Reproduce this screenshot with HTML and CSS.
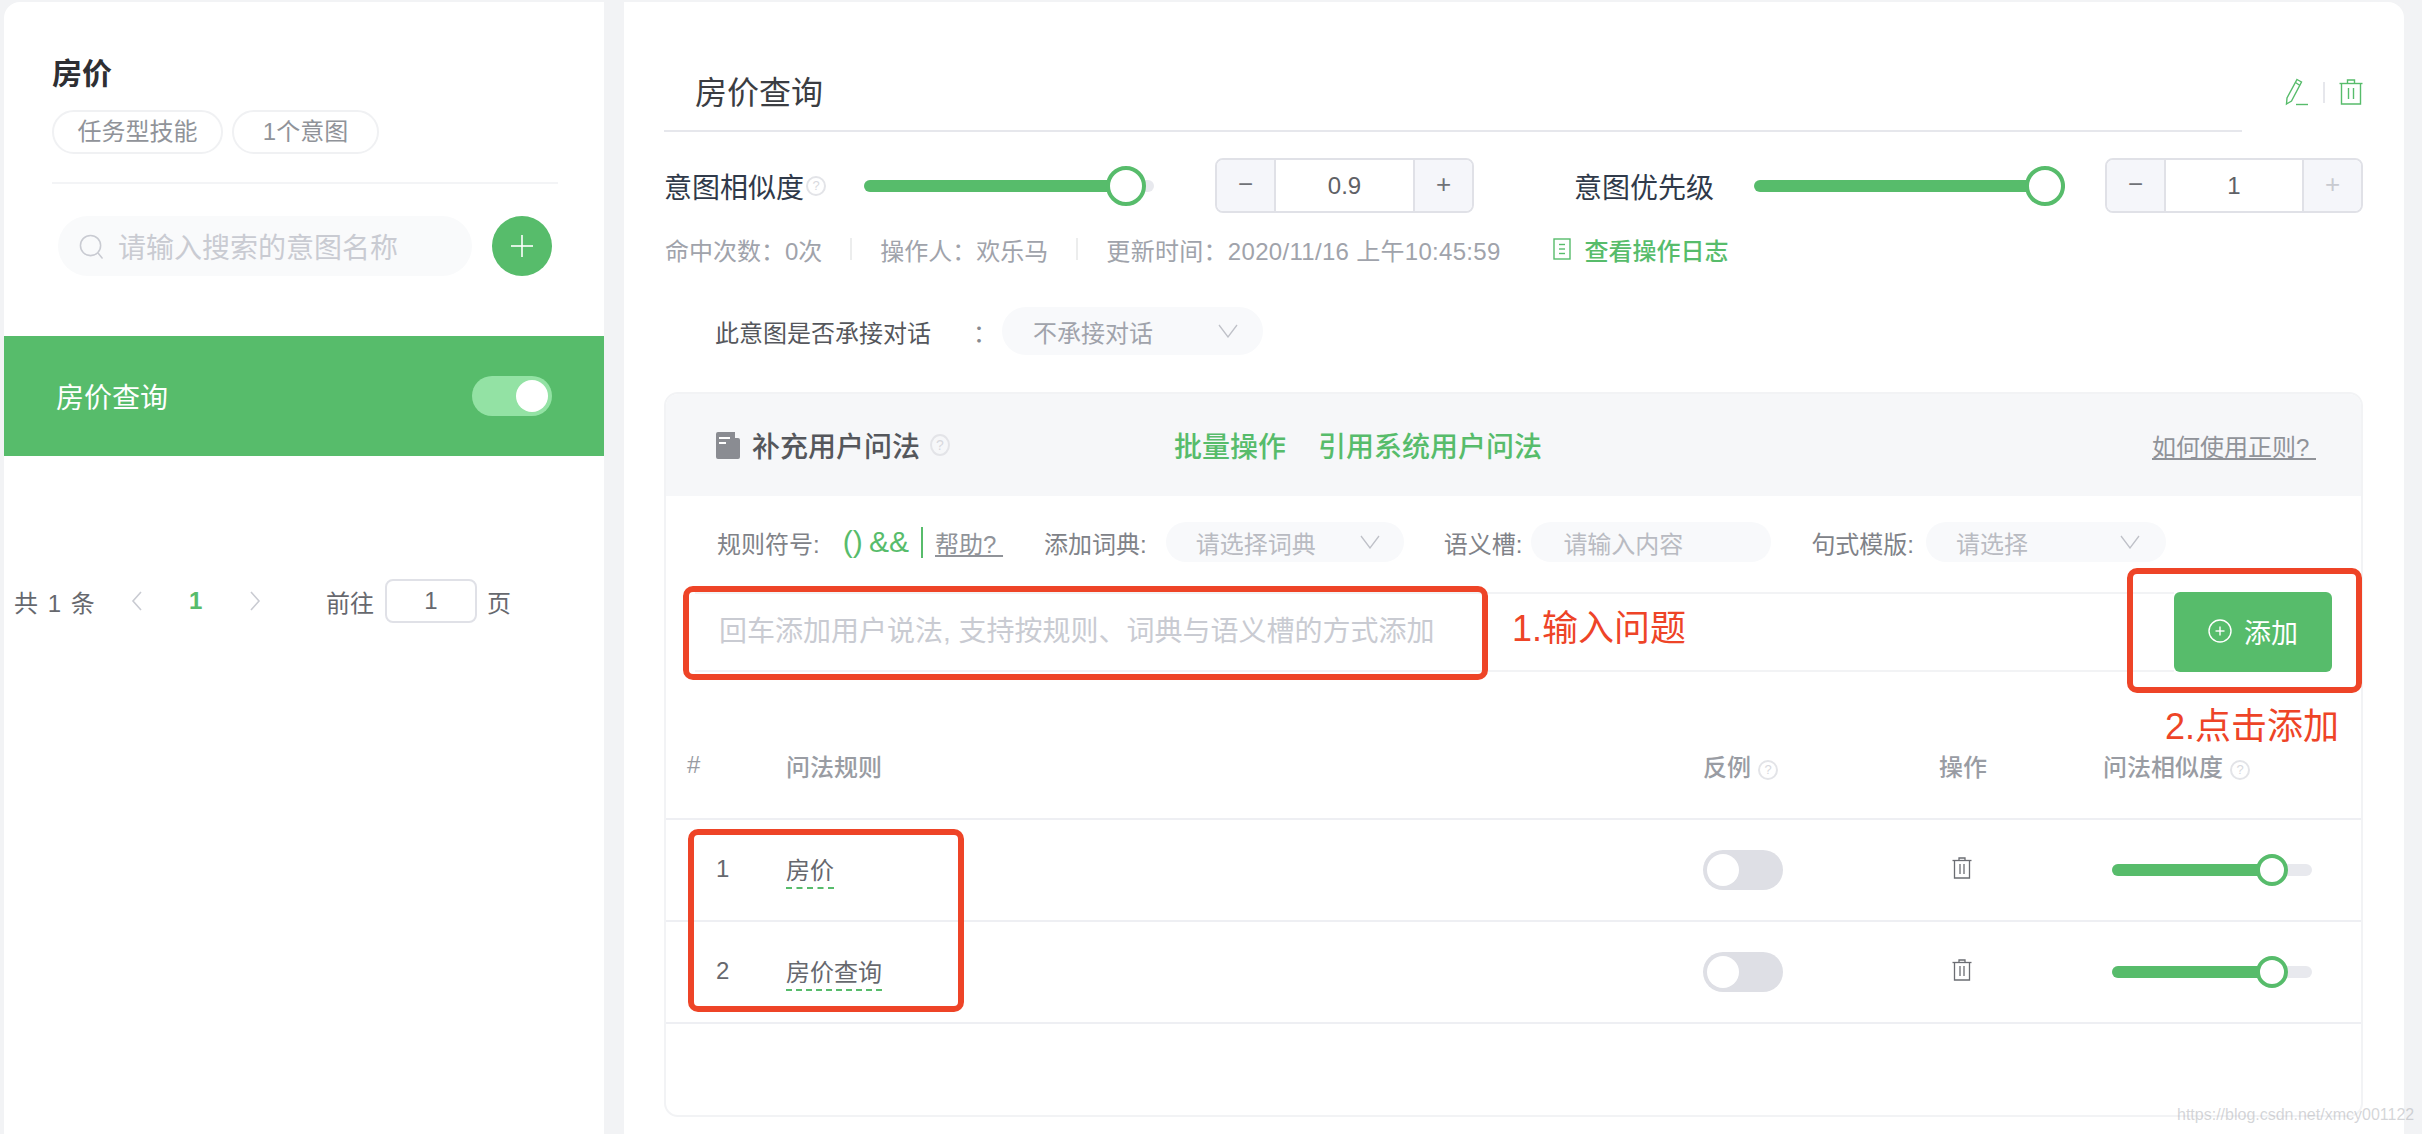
FILE: index.html
```html
<!DOCTYPE html>
<html>
<head>
    <title>房价查询</title>
    <meta name="viewport" content="width=device-width, initial-scale=1.0">
    <link rel="stylesheet" href="styles.css">
</head>
<body>
    <!-- Left column -->
    <aside class="sidebar">
        <div class="side-head">
            <div class="side-title">房价</div>
            <div class="chips">
                <span class="chip chip-skill">任务型技能</span>
                <span class="chip chip-count">1个意图</span>
            </div>
        </div>

        <div class="side-search">
            <div class="search-box">
                <svg class="search-icon" viewBox="0 0 26 26" fill="none" stroke="currentColor" stroke-width="1.6" stroke-linecap="round">
                    <circle cx="12" cy="12" r="10.5"/>
                    <line x1="20" y1="20" x2="24" y2="25"/>
                </svg>
                <span>请输入搜索的意图名称</span>
            </div>
            <button class="add-round">
                <svg viewBox="0 0 24 24" width="24" height="24" stroke="currentColor" stroke-width="1.6">
                    <line x1="12" y1="1" x2="12" y2="23"/>
                    <line x1="1" y1="12" x2="23" y2="12"/>
                </svg>
            </button>
        </div>

        <div class="intent-item">
            <span>房价查询</span>
            <span class="toggle toggle-on"><i></i></span>
        </div>

        <div class="pager">
            <span class="pager-total">共 1 条</span>
            <svg class="pager-arrow pager-prev" viewBox="0 0 12 20" fill="none" stroke="currentColor" stroke-width="1.6"><polyline points="10,1 2,10 10,19"/></svg>
            <span class="pager-num">1</span>
            <svg class="pager-arrow pager-next" viewBox="0 0 12 20" fill="none" stroke="currentColor" stroke-width="1.6"><polyline points="2,1 10,10 2,19"/></svg>
            <span class="pager-goto">前往</span>
            <span class="pager-input">1</span>
            <span class="pager-unit">页</span>
        </div>
    </aside>

    <!-- Right panel -->
    <main class="panel">
        <div class="title-row">
            <div class="title-box">房价查询</div>
            <div class="title-actions">
                <svg class="icon-edit" viewBox="0 0 24 28" fill="none" stroke="currentColor" stroke-width="1.4">
                    <path d="M12 1.500 L16.500 4 L6.500 23 L1.500 26 L2 20 Z"/>
                    <line x1="10.500" y1="4.500" x2="15" y2="7.500"/>
                    <line x1="11" y1="26.500" x2="23" y2="26.500"/>
                </svg>
                <span class="action-sep"></span>
                <svg class="icon-trash-green" viewBox="0 0 24 26" fill="none" stroke="currentColor" stroke-width="1.4">
                    <path d="M8.500 4 V1 H15.500 V4"/>
                    <line x1="0.500" y1="4.500" x2="23.500" y2="4.500"/>
                    <path d="M2.500 4.500 V25 H21.500 V4.500"/>
                    <line x1="9.500" y1="9" x2="9.500" y2="20"/>
                    <line x1="14.500" y1="9" x2="14.500" y2="20"/>
                </svg>
            </div>
        </div>

        <div class="setting-row">
            <div class="setting-label label-sim">意图相似度<span class="help help-sm">?</span></div>
            <div class="slider slider-sim">
                <div class="slider-track"><div class="slider-fill" style="width: 90.500%"></div></div>
                <span class="slider-thumb" style="left: 90.500%"></span>
            </div>
            <div class="number number-sim">
                <span class="number-btn">−</span>
                <span class="number-val">0.9</span>
                <span class="number-btn">+</span>
            </div>
            <div class="setting-label label-pri">意图优先级</div>
            <div class="slider slider-pri">
                <div class="slider-track"><div class="slider-fill" style="width: 100%"></div></div>
                <span class="slider-thumb" style="left: 93.600%"></span>
            </div>
            <div class="number number-pri">
                <span class="number-btn">−</span>
                <span class="number-val">1</span>
                <span class="number-btn number-off">+</span>
            </div>
        </div>

        <div class="info-row">
            <span>命中次数：0次</span>
            <span class="info-sep"></span>
            <span>操作人：欢乐马</span>
            <span class="info-sep"></span>
            <span class="info-time">更新时间：2020/11/16 上午10:45:59</span>
            <svg class="icon-log" viewBox="0 0 18 22" fill="none" stroke="currentColor" stroke-width="1.4">
                <rect x="1" y="1" width="16" height="20"/>
                <line x1="6" y1="6.500" x2="12" y2="6.500"/>
                <line x1="6" y1="11" x2="12" y2="11"/>
                <line x1="6" y1="15.500" x2="12" y2="15.500"/>
            </svg>
            <a class="log-link">查看操作日志</a>
        </div>

        <div class="context-row">
            <span class="context-label">此意图是否承接对话</span>
            <span class="context-colon">：</span>
            <div class="select select-context">
                <span>不承接对话</span>
                <svg class="chevron" viewBox="0 0 20 14" fill="none" stroke="currentColor" stroke-width="1.3"><polyline points="1,1 10,13 19,1"/></svg>
            </div>
        </div>

        <section class="card">
            <div class="card-head">
                <svg class="icon-book" viewBox="0 0 24 27">
                    <path fill="#8a8c92" d="M2 0 H19 V6 H22 Q24 6 24 8 V25 Q24 27 22 27 H2 Q0 27 0 25 V2 Q0 0 2 0 Z"/>
                    <path fill="#fff" d="M3 5 H14 V7 H3 Z M3 10 H10 V12 H3 Z"/>
                </svg>
                <span class="card-title">补充用户问法</span>
                <span class="help help-card">?</span>
                <a class="head-link link-batch">批量操作</a>
                <a class="head-link link-quote">引用系统用户问法</a>
                <a class="regex-link">如何使用正则?&nbsp;</a>
            </div>

            <div class="toolbar">
                <span class="tool-label">规则符号:</span>
                <span class="rule-signs">() &amp;&amp;</span>
                <span class="rule-bar"></span>
                <a class="help-link">帮助?&nbsp;</a>
                <span class="tool-label tool-dict">添加词典:</span>
                <div class="select select-dict">
                    <span>请选择词典</span>
                    <svg class="chevron" viewBox="0 0 20 14" fill="none" stroke="currentColor" stroke-width="1.3"><polyline points="1,1 10,13 19,1"/></svg>
                </div>
                <span class="tool-label tool-slot">语义槽:</span>
                <div class="select select-slot"><span>请输入内容</span></div>
                <span class="tool-label tool-tpl">句式模版:</span>
                <div class="select select-tpl">
                    <span>请选择</span>
                    <svg class="chevron" viewBox="0 0 20 14" fill="none" stroke="currentColor" stroke-width="1.3"><polyline points="1,1 10,13 19,1"/></svg>
                </div>
            </div>

            <div class="add-row">
                <div class="add-input">回车添加用户说法, 支持按规则、词典与语义槽的方式添加</div>
                <button class="add-btn">
                    <svg viewBox="0 0 24 24" width="24" height="24" fill="none" stroke="currentColor" stroke-width="1.4">
                        <circle cx="12" cy="12" r="11"/>
                        <line x1="12" y1="7.500" x2="12" y2="16.500"/>
                        <line x1="7.500" y1="12" x2="16.500" y2="12"/>
                    </svg>
                    <span>添加</span>
                </button>
            </div>

            <div class="table-row table-head">
                <span class="col-hash">#</span>
                <span>问法规则</span>
                <span>反例<span class="help help-th">?</span></span>
                <span>操作</span>
                <span>问法相似度<span class="help help-th">?</span></span>
            </div>

            <div class="table-row">
                <span class="col-index">1</span>
                <span><span class="rule-text">房价</span></span>
                <span class="toggle toggle-off"><i></i></span>
                <svg class="icon-trash" viewBox="0 0 20 22" fill="none" stroke="currentColor" stroke-width="1.3">
                    <path d="M7 3 V1 H13 V3"/>
                    <line x1="0.500" y1="3.500" x2="19.500" y2="3.500"/>
                    <path d="M2.500 3.500 V21 H17.500 V3.500"/>
                    <line x1="8" y1="7" x2="8" y2="17"/>
                    <line x1="12" y1="7" x2="12" y2="17"/>
                </svg>
                <div class="slider slider-row">
                    <div class="slider-track"><div class="slider-fill" style="width: 80%"></div></div>
                    <span class="slider-thumb" style="left: 80%"></span>
                </div>
            </div>

            <div class="table-row">
                <span class="col-index">2</span>
                <span><span class="rule-text">房价查询</span></span>
                <span class="toggle toggle-off"><i></i></span>
                <svg class="icon-trash" viewBox="0 0 20 22" fill="none" stroke="currentColor" stroke-width="1.3">
                    <path d="M7 3 V1 H13 V3"/>
                    <line x1="0.500" y1="3.500" x2="19.500" y2="3.500"/>
                    <path d="M2.500 3.500 V21 H17.500 V3.500"/>
                    <line x1="8" y1="7" x2="8" y2="17"/>
                    <line x1="12" y1="7" x2="12" y2="17"/>
                </svg>
                <div class="slider slider-row">
                    <div class="slider-track"><div class="slider-fill" style="width: 80%"></div></div>
                    <span class="slider-thumb" style="left: 80%"></span>
                </div>
            </div>
        </section>
    </main>

    <!-- Red marks drawn over the screenshot -->
    <div class="mark mark-input"></div>
    <div class="mark mark-add"></div>
    <div class="mark mark-rows"></div>
    <div class="note note-input">1.输入问题</div>
    <div class="note note-add">2.点击添加</div>
    <div class="watermark">https://blog.csdn.net/xmcy001122</div>
</body>
</html>
```

FILE: styles.css
```css
* {
    box-sizing: border-box;
}

html, body {
    height: 100%;
}

body {
    margin: 0;
    position: relative;
    overflow: hidden;
    display: flex;
    align-items: flex-start;
    background-color: #f2f3f5;
    color: #6b6d73;
    font-family: "Liberation Sans", "Noto Sans CJK SC", sans-serif;
    font-size: 24px;
    white-space: nowrap;
}

button {
    border: none;
    padding: 0;
    font-family: inherit;
}

/* sidebar */
.sidebar {
    width: 600px;
    height: 1132px;
    margin: 2px 0 0 4px;
    background-color: white;
    border-top-left-radius: 16px;
}

.side-head {
    margin: 0 46px 0 48px;
    padding: 56px 0 28px;
    border-bottom: 2px solid #f3f4f6;
}

.side-title {
    height: 32px;
    line-height: 32px;
    font-size: 30px;
    font-weight: 700;
    color: #2e2f33;
}

.chips {
    display: flex;
    gap: 9px;
    margin-top: 20px;
}

.chip {
    height: 44px;
    line-height: 40px;
    border: 2px solid #f0f1f3;
    border-radius: 22px;
    font-size: 24px;
    color: #909399;
    text-align: center;
}

.chip-skill {
    width: 171px;
}

.chip-count {
    width: 147px;
}

.side-search {
    display: flex;
    gap: 20px;
    margin: 32px 0 0 54px;
}

.search-box {
    width: 414px;
    height: 60px;
    padding-left: 21px;
    display: flex;
    align-items: center;
    gap: 14px;
    background-color: #f9fafb;
    border-radius: 30px;
    font-size: 28px;
    color: #c9cbd2;
}

.search-icon {
    width: 25px;
    height: 25px;
}

.add-round {
    width: 60px;
    height: 60px;
    border-radius: 50%;
    display: flex;
    align-items: center;
    justify-content: center;
    background-color: #57bc6b;
    color: white;
}

.intent-item {
    height: 120px;
    margin-top: 60px;
    padding: 0 52px;
    display: flex;
    align-items: center;
    justify-content: space-between;
    background-color: #57bc6b;
    color: white;
    font-size: 28px;
}

.toggle {
    display: flex;
    align-items: center;
    width: 80px;
    height: 40px;
    padding: 0 4px;
    border-radius: 20px;
}

.toggle i {
    width: 32px;
    height: 32px;
    border-radius: 50%;
    background-color: white;
}

.toggle-on {
    justify-content: flex-end;
    background-color: #93e2a4;
}

.toggle-off {
    background-color: #dedfe5;
}

.pager {
    display: flex;
    align-items: center;
    height: 44px;
    margin-top: 123px;
    padding-left: 10px;
    color: #66686e;
}

.pager-total {
    width: 80px;
    word-spacing: 3px;
}

.pager-arrow {
    width: 12px;
    height: 20px;
    color: #c9cbd2;
}

.pager-prev {
    margin-left: 37px;
}

.pager-num {
    width: 14px;
    margin-left: 46px;
    font-weight: 700;
    color: #57bc6b;
}

.pager-next {
    margin-left: 46px;
}

.pager-goto {
    margin-left: 65px;
}

.pager-input {
    width: 92px;
    height: 44px;
    line-height: 40px;
    margin-left: 11px;
    border: 2px solid #e0e1e7;
    border-radius: 8px;
    text-align: center;
}

.pager-unit {
    margin-left: 10px;
}

/* right panel */
.panel {
    width: 1780px;
    height: 1132px;
    margin: 2px 0 0 20px;
    padding: 0 41px 0 40px;
    background-color: white;
    border-top-right-radius: 16px;
}

.title-row {
    display: flex;
    justify-content: space-between;
    align-items: flex-start;
}

.title-box {
    width: 1578px;
    height: 130px;
    padding: 69px 0 0 31px;
    line-height: 44px;
    border-bottom: 2px solid #e6e7ec;
    font-size: 32px;
    color: #3b3d42;
}

.title-actions {
    display: flex;
    align-items: center;
    margin-top: 76px;
    color: #57bc6b;
}

.icon-edit {
    width: 24px;
    height: 28px;
}

.action-sep {
    width: 2px;
    height: 21px;
    margin: 0 14px;
    background-color: #e6e7ec;
}

.icon-trash-green {
    width: 24px;
    height: 26px;
}

.setting-row {
    display: flex;
    align-items: center;
    height: 55px;
    margin-top: 26px;
}

.setting-label {
    display: flex;
    align-items: center;
    font-size: 28px;
    color: #303a4a;
}

.label-sim {
    width: 200px;
}

.label-pri {
    width: 140px;
    margin-left: 100px;
}

.help {
    display: inline-block;
    border: 2px solid #e3e4e8;
    border-radius: 50%;
    text-align: center;
    color: #d8d9de;
    font-weight: 400;
}

.help-sm {
    width: 20px;
    height: 20px;
    line-height: 16px;
    margin-left: 2px;
    font-size: 13px;
}

.help-card {
    width: 20px;
    height: 22px;
    line-height: 18px;
    margin-left: 10px;
    font-size: 14px;
}

.help-th {
    width: 20px;
    height: 20px;
    line-height: 16px;
    margin-left: 7px;
    font-size: 13px;
    vertical-align: 2px;
}

.slider {
    position: relative;
    display: flex;
    align-items: center;
    height: 40px;
}

.slider-track {
    width: 100%;
    height: 12px;
    border-radius: 6px;
    background-color: #e8e9ee;
    overflow: hidden;
}

.slider-fill {
    height: 100%;
    background-color: #57bc6b;
}

.slider-thumb {
    position: absolute;
    top: 0;
    width: 40px;
    height: 40px;
    margin-left: -20px;
    border: 4px solid #57bc6b;
    border-radius: 50%;
    background-color: white;
}

.slider-sim {
    width: 290px;
}

.slider-pri {
    width: 311px;
    margin-left: 40px;
}

.slider-row {
    width: 200px;
    height: 32px;
    margin-left: 9px;
}

.slider-row .slider-thumb {
    width: 32px;
    height: 32px;
    margin-left: -16px;
}

.number {
    display: flex;
    height: 55px;
    border: 2px solid #e0e1e7;
    border-radius: 8px;
    overflow: hidden;
}

.number-sim {
    width: 259px;
    margin-left: 61px;
}

.number-pri {
    width: 258px;
    margin-left: 40px;
}

.number-btn {
    width: 57px;
    line-height: 49px;
    background-color: #f5f6fa;
    text-align: center;
    font-size: 26px;
    color: #707277;
}

.number-off {
    color: #c8cad0;
}

.number-val {
    flex: 1;
    line-height: 51px;
    border-left: 2px solid #e0e1e7;
    border-right: 2px solid #e0e1e7;
    text-align: center;
    color: #5f6166;
}

.info-row {
    display: flex;
    align-items: center;
    height: 40px;
    margin-top: 16px;
    padding-left: 1px;
    color: #a0a3ab;
}

.info-sep {
    width: 2px;
    height: 22px;
    margin: 0 28px;
    background-color: #eceded;
}

.info-time {
    letter-spacing: 0.3px;
}

.icon-log {
    width: 18px;
    height: 22px;
    margin-left: 52px;
    color: #57bc6b;
}

.log-link {
    margin-left: 14px;
    font-weight: 500;
    color: #57bc6b;
}

.context-row {
    display: flex;
    align-items: center;
    height: 48px;
    margin-top: 38px;
    padding-left: 51px;
    color: #55575c;
}

.context-label {
    width: 258px;
    font-size: 24px;
}

.context-colon {
    width: 29px;
    color: #888a90;
}

.select {
    position: relative;
    display: flex;
    align-items: center;
    justify-content: space-between;
    background-color: #f8f9fb;
    border-radius: 24px;
    color: #b9bbc2;
}

.select-context {
    width: 261px;
    height: 48px;
    padding: 0 25px 0 31px;
    color: #a0a3ab;
}

.chevron {
    width: 20px;
    height: 14px;
    color: #bfc1c8;
}

/* card */
.card {
    width: 1699px;
    height: 725px;
    margin-top: 37px;
    border: 2px solid #f2f3f5;
    border-radius: 14px;
    overflow: hidden;
}

.card-head {
    display: flex;
    align-items: center;
    height: 102px;
    padding-left: 50px;
    background-color: #f6f7f9;
}

.icon-book {
    width: 24px;
    height: 27px;
}

.card-title {
    margin-left: 12px;
    font-size: 28px;
    font-weight: 500;
    color: #55575c;
}

.head-link {
    font-size: 28px;
    font-weight: 500;
    color: #57bc6b;
}

.link-batch {
    margin-left: 224px;
}

.link-quote {
    margin-left: 32px;
}

.regex-link {
    margin-left: auto;
    margin-right: 45px;
    color: #909399;
    text-decoration: underline;
}

.toolbar {
    display: flex;
    align-items: center;
    height: 96px;
    padding: 0 0 4px 51px;
}

.tool-label {
    color: #808288;
}

.rule-signs {
    margin-left: 23px;
    font-size: 30px;
    word-spacing: -2px;
    color: #57bc6b;
}

.rule-bar {
    width: 2px;
    height: 31px;
    margin-left: 12px;
    background-color: #57bc6b;
}

.help-link {
    margin-left: 12px;
    color: #909399;
    text-decoration: underline;
}

.tool-dict {
    margin-left: 41px;
}

.select-dict {
    width: 238px;
    height: 40px;
    margin-left: 19px;
    padding: 0 24px 0 30px;
}

.tool-slot {
    margin-left: 40px;
}

.select-slot {
    width: 240px;
    height: 40px;
    margin-left: 9px;
    padding-left: 32px;
}

.tool-tpl {
    margin-left: 40px;
}

.select-tpl {
    width: 240px;
    height: 40px;
    margin-left: 12px;
    padding: 0 26px 0 30px;
}

.add-row {
    display: flex;
    height: 80px;
    margin: 0 29px;
}

.add-input {
    flex: 1;
    padding-left: 24px;
    line-height: 76px;
    border-top: 2px solid #f2f3f5;
    border-bottom: 2px solid #f2f3f5;
    font-size: 28px;
    color: #c9cbd2;
}

.add-btn {
    display: flex;
    align-items: center;
    justify-content: center;
    gap: 12px;
    width: 158px;
    padding-bottom: 2px;
    background-color: #57bc6b;
    border-radius: 6px;
    color: white;
    font-size: 27px;
}

.table-row {
    display: grid;
    grid-template-columns: 120px 917px 236px 164px 1fr;
    align-items: center;
    height: 102px;
    border-bottom: 2px solid #eeeff3;
}

.table-head {
    height: 148px;
    padding-top: 40px;
    font-size: 24px;
    font-weight: 500;
    color: #999ca3;
}

.col-hash {
    padding-left: 21px;
}

.col-index {
    padding: 0 0 2px 50px;
    color: #66686e;
}

.rule-text {
    display: inline-block;
    line-height: 32px;
    padding-top: 3px;
    border-bottom: 2px dashed #57bc6b;
    color: #66686e;
}

.icon-trash {
    width: 20px;
    height: 22px;
    margin: -4px 0 0 13px;
    color: #6b6d73;
}

/* annotations on top of the page */
.mark {
    position: absolute;
    border: 6px solid #ee4427;
    border-radius: 10px;
}

.mark-input {
    left: 683px;
    top: 586px;
    width: 805px;
    height: 94px;
}

.mark-add {
    left: 2127px;
    top: 568px;
    width: 235px;
    height: 125px;
}

.mark-rows {
    left: 688px;
    top: 829px;
    width: 276px;
    height: 183px;
}

.note {
    position: absolute;
    font-size: 36px;
    line-height: 44px;
    color: #ee4427;
}

.note-input {
    left: 1512px;
    top: 607px;
}

.note-add {
    left: 2165px;
    top: 705px;
}

.watermark {
    position: absolute;
    left: 2177px;
    top: 1106px;
    font-size: 16px;
    color: rgba(170, 172, 178, 0.5);
}
```
